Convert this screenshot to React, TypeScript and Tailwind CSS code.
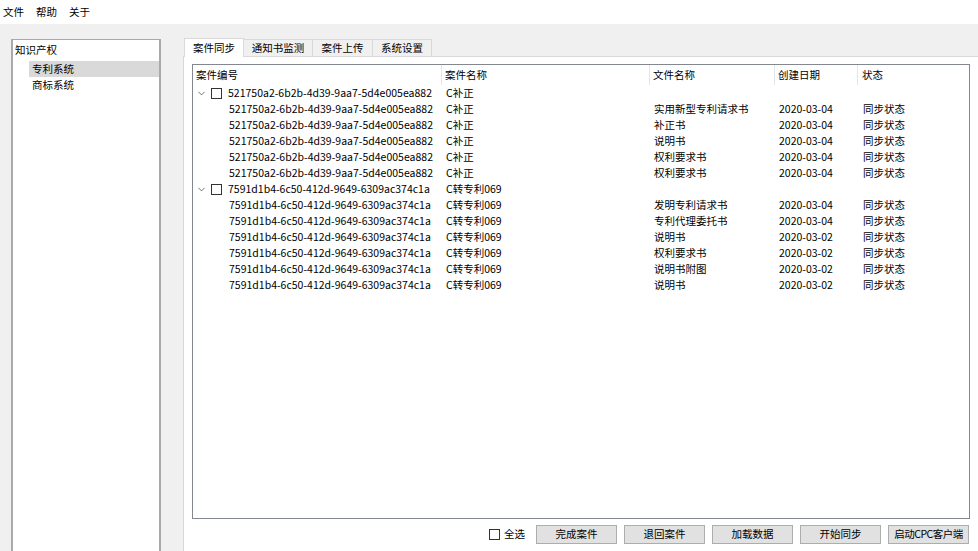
import { ChevronDown } from "lucide-react";

type Child = { file: string; date: string };
type Group = { id: string; name: string; items: Child[] };

const groups: Group[] = [
  {
    id: "521750a2-6b2b-4d39-9aa7-5d4e005ea882",
    name: "C补正",
    items: [
      { file: "实用新型专利请求书", date: "2020-03-04" },
      { file: "补正书", date: "2020-03-04" },
      { file: "说明书", date: "2020-03-04" },
      { file: "权利要求书", date: "2020-03-04" },
      { file: "权利要求书", date: "2020-03-04" },
    ],
  },
  {
    id: "7591d1b4-6c50-412d-9649-6309ac374c1a",
    name: "C转专利069",
    items: [
      { file: "发明专利请求书", date: "2020-03-04" },
      { file: "专利代理委托书", date: "2020-03-04" },
      { file: "说明书", date: "2020-03-02" },
      { file: "权利要求书", date: "2020-03-02" },
      { file: "说明书附图", date: "2020-03-02" },
      { file: "说明书", date: "2020-03-02" },
    ],
  },
];

const tabs = [
  { label: "案件同步", w: "w-[60px]" },
  { label: "通知书监测", w: "w-[70px]" },
  { label: "案件上传", w: "w-[61px]" },
  { label: "系统设置", w: "w-[60px]" },
];
const buttons = ["完成案件", "退回案件", "加载数据", "开始同步", "启动CPC客户端"];

function Box() {
  return <span className="inline-block h-[11px] w-[11px] shrink-0 border border-[#333] bg-white" />;
}

export default function App() {
  return (
    <div
      className="flex h-[551px] w-[978px] flex-col overflow-hidden bg-[#f0f0f0] text-[10.5px] leading-none whitespace-nowrap text-black"
      style={{ fontFamily: '"Noto Sans CJK SC", "Noto Sans", sans-serif' }}
    >
      {/* menu */}
      <div className="flex h-6 items-center gap-[12px] bg-white pl-[3px]">
        <span>文件</span>
        <span>帮助</span>
        <span>关于</span>
      </div>

      <div className="flex flex-1 pt-[15px]">
        {/* left tree */}
        <div className="ml-[11px] w-[150px] border-t border-r-2 border-l-2 border-[#a9a9a9] bg-white pt-[3px]">
          <div className="flex h-[14px] items-center pl-[2px]">知识产权</div>
          <div className="mt-[4px] ml-[16px] flex h-[16px] items-center bg-[#d9d9d9] pl-[3px]">专利系统</div>
          <div className="ml-[16px] flex h-[16px] items-center pl-[3px]">商标系统</div>
        </div>

        {/* tabs */}
        <div className="ml-[22px] flex flex-1 flex-col">
          <div className="flex h-[17px] items-end pl-[1px]">
            {tabs.map((t, i) =>
              i === 0 ? (
                <div
                  key={t.label}
                  className={`relative z-10 -mb-px flex h-[19px] ${t.w} items-center justify-center border border-b-0 border-[#d9d9d9] bg-white`}
                >
                  {t.label}
                </div>
              ) : (
                <div
                  key={t.label}
                  className={`-ml-px flex h-[17px] ${t.w} items-center justify-center border border-b-0 border-[#d9d9d9] bg-[#f0f0f0]`}
                >
                  {t.label}
                </div>
              ),
            )}
          </div>
          <div className="flex flex-1 flex-col border-t border-l border-[#d9d9d9] bg-white pt-[7px] pl-[8px]">
            {/* tree list */}
            <div className="flex h-[455px] w-[778px] flex-col border border-[#828790] bg-white">
              <div className="flex h-[20px] items-center">
                <div className="flex h-full w-[249px] items-center border-r border-[#e5e5e5] pl-[3px]">案件编号</div>
                <div className="flex h-full w-[208px] items-center border-r border-[#e5e5e5] pl-[3px]">案件名称</div>
                <div className="flex h-full w-[125px] items-center border-r border-[#e5e5e5] pl-[3px]">文件名称</div>
                <div className="flex h-full w-[83px] items-center border-r border-[#e5e5e5] pl-[3px]">创建日期</div>
                <div className="flex h-full items-center pl-[4px]">状态</div>
              </div>
              {groups.map((g) => (
                <div key={g.id}>
                  <div className="flex h-[16px] items-center">
                    <div className="flex w-[249px] items-center pl-[3px]">
                      <ChevronDown className="size-[11px] text-[#333]" strokeWidth={1.5} />
                      <span className="ml-[4px] flex">
                        <Box />
                      </span>
                      <span className="ml-[6px]">{g.id}</span>
                    </div>
                    <div className="w-[208px] pl-[4px]">{g.name}</div>
                  </div>
                  {g.items.map((c, i) => (
                    <div key={i} className="flex h-[16px] items-center">
                      <div className="w-[249px] pl-[36px]">{g.id}</div>
                      <div className="w-[208px] pl-[4px]">{g.name}</div>
                      <div className="w-[125px] pl-[4px]">{c.file}</div>
                      <div className="w-[83px] pl-[4px]">{c.date}</div>
                      <div className="pl-[5px]">同步状态</div>
                    </div>
                  ))}
                </div>
              ))}
            </div>

            {/* bottom bar */}
            <div className="mt-[6px] flex w-[777px] items-center justify-end">
              <Box />
              <span className="mr-[11px] ml-[4px]">全选</span>
              <div className="flex gap-[7px]">
                {buttons.map((b) => (
                  <button
                    key={b}
                    className={`flex h-[19px] w-[81px] items-center justify-center border border-[#adadad] bg-[#e1e1e1] ${
                      b.length > 5 ? "tracking-[-0.5px]" : ""
                    }`}
                  >
                    {b}
                  </button>
                ))}
              </div>
            </div>
          </div>
        </div>
      </div>
    </div>
  );
}
